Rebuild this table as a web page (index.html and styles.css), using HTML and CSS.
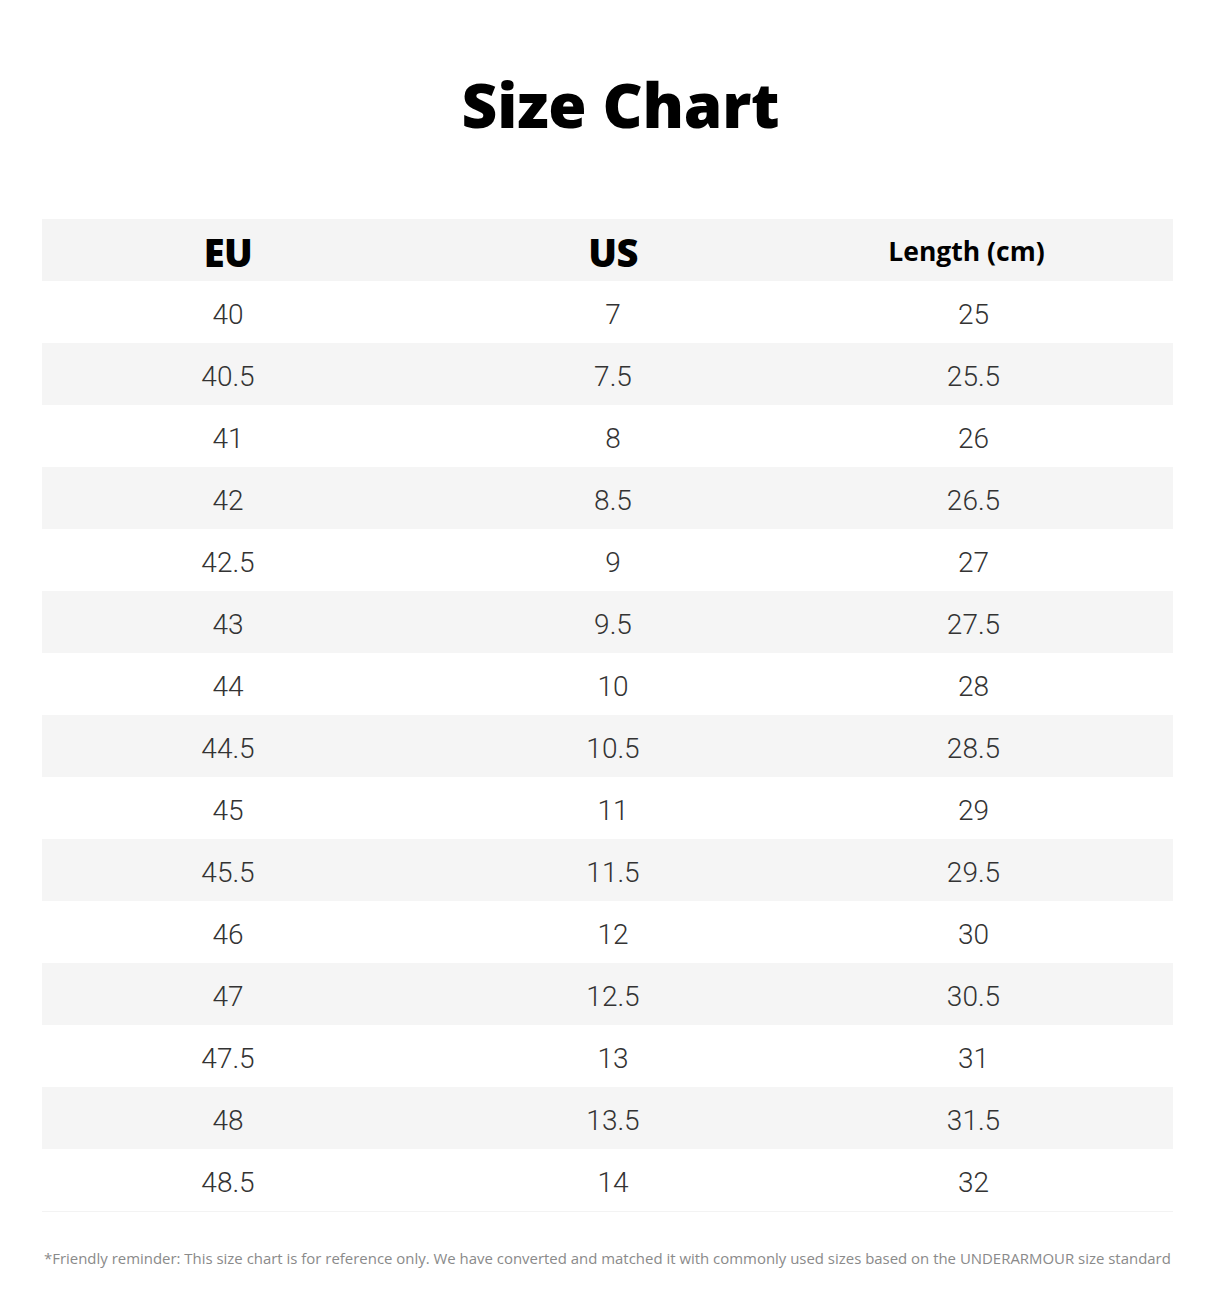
FILE: index.html
```html
<!DOCTYPE html>
<html lang="en">
<head>
    <meta charset="UTF-8">
    <meta name="viewport" content="width=device-width, initial-scale=1.0">
    <title>Size Chart</title>
    <link rel="stylesheet" href="styles.css">
</head>
<body>

    <div class="page">
        <h1 class="title">Size Chart</h1>

        <table class="size-table">
            <thead>
                <tr>
                    <th class="col-eu">EU</th>
                    <th class="col-us">US</th>
                    <th class="col-len">Length (cm)</th>
                </tr>
            </thead>
            <tbody>
                <tr><td>40</td><td>7</td><td>25</td></tr>
                <tr><td>40.5</td><td>7.5</td><td>25.5</td></tr>
                <tr><td>41</td><td>8</td><td>26</td></tr>
                <tr><td>42</td><td>8.5</td><td>26.5</td></tr>
                <tr><td>42.5</td><td>9</td><td>27</td></tr>
                <tr><td>43</td><td>9.5</td><td>27.5</td></tr>
                <tr><td>44</td><td>10</td><td>28</td></tr>
                <tr><td>44.5</td><td>10.5</td><td>28.5</td></tr>
                <tr><td>45</td><td>11</td><td>29</td></tr>
                <tr><td>45.5</td><td>11.5</td><td>29.5</td></tr>
                <tr><td>46</td><td>12</td><td>30</td></tr>
                <tr><td>47</td><td>12.5</td><td>30.5</td></tr>
                <tr><td>47.5</td><td>13</td><td>31</td></tr>
                <tr><td>48</td><td>13.5</td><td>31.5</td></tr>
                <tr><td>48.5</td><td>14</td><td>32</td></tr>
            </tbody>
        </table>

        <p class="note">*Friendly reminder: This size chart is for reference only. We have converted and matched it with commonly used sizes based on the UNDERARMOUR size standard</p>
    </div>

</body>
</html>
```

FILE: styles.css
```css
body {
    margin: 0;
    background-color: #ffffff;
    font-family: "Open Sans", Arial, sans-serif;
    color: #333;
}
.page {
    width: 1131px;
    margin-left: 42px;
}
.title {
    margin: 0;
    height: 219px;
    box-sizing: border-box;
    padding-top: 64px;
    padding-left: 26px;
    text-align: center;
    font-family: "Open Sans", sans-serif;
    font-weight: 800;
    font-size: 62px;
    line-height: 80px;
    letter-spacing: -0.2px;
    color: #000;
}

/* Table */
.size-table {
    width: 1131px;
    border-collapse: collapse;
    table-layout: fixed;
}
.size-table th,
.size-table td {
    box-sizing: border-box;
    height: 62px;
    padding: 0;
    text-align: center;
    vertical-align: middle;
}
.col-eu { width: 372px; }
.col-us { width: 398px; }
.col-len { width: 361px; }
.size-table td:nth-child(3) {
    padding-right: 38px;
}
.size-table thead tr {
    background: #f4f4f4;
}
.size-table th {
    font-family: "Open Sans", sans-serif;
    font-weight: 800;
    font-size: 38px;
    color: #000;
    padding-top: 4px;
    letter-spacing: -0.5px;
}
.size-table th.col-len {
    font-size: 26.5px;
    font-weight: 700;
    padding-top: 2px;
    padding-right: 52px;
    letter-spacing: 0;
}
.size-table td {
    font-family: Roboto, sans-serif;
    font-weight: 300;
    font-size: 28px;
    color: #333;
    padding-top: 5px;
}
.size-table tbody tr:nth-child(even) {
    background: #f5f5f5;
}
.size-table tbody tr:last-child {
    border-bottom: 1px solid #f3f3f3;
}

/* Footnote */
.note {
    margin: 36px 0 0 2px;
    font-family: "Open Sans", sans-serif;
    font-size: 14.95px;
    color: #8a8a8a;
    white-space: nowrap;
}
```
